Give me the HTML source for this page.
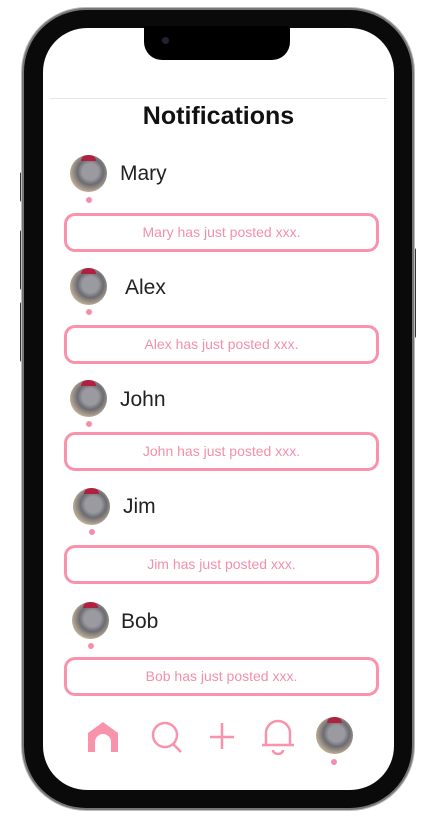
<!DOCTYPE html>
<html><head><style>
body{margin:0;width:445px;height:822px;background:#fff;position:relative;overflow:hidden;font-family:"Liberation Sans",sans-serif}
.abs{position:absolute}
.frame{left:24px;top:10px;width:388px;height:798px;border-radius:62px;background:#0a0a0a;box-shadow:0 0 0 2px #777,0 0 0 3px #bbb}
.screen{left:43px;top:28px;width:351px;height:762px;border-radius:44px;background:#fff}
.notch{left:144px;top:26px;width:146px;height:34px;background:#000;border-radius:0 0 18px 18px}
.av{width:37px;height:37px;border-radius:50%;background:radial-gradient(circle at 55% 45%,#9a9aa0 0 28%,#6b6b72 45%,#c8b79a 75%,#8a7f70);overflow:hidden}
.av:before{content:"";position:absolute;left:11px;top:0;width:15px;height:6px;background:#b02040;border-radius:8px 8px 0 0}
.name{font-size:21px;color:#222}
.dot{width:6px;height:6px;border-radius:50%;background:#f48fab}
.box{left:64px;width:309px;height:33px;border:3px solid #f993ac;border-radius:11px;color:#f48fab;font-size:14px;text-align:center;line-height:33px}
</style></head><body>
<div class="abs" style="left:20px;top:172px;width:6px;height:30px;background:#333;border-radius:2px"></div>
<div class="abs" style="left:20px;top:230px;width:6px;height:60px;background:#333;border-radius:2px"></div>
<div class="abs" style="left:20px;top:302px;width:6px;height:60px;background:#333;border-radius:2px"></div>
<div class="abs" style="left:410px;top:248px;width:6px;height:90px;background:#333;border-radius:2px"></div>
<div class="abs frame"></div>
<div class="abs screen"></div>
<div class="abs notch"></div>
<div class="abs" style="left:162px;top:37px;width:7px;height:7px;border-radius:50%;background:#223"></div>
<div class="abs" style="left:50px;top:98px;width:337px;height:1px;background:#e6e6e6"></div>
<div class="abs" style="left:0;width:437px;top:102px;text-align:center;font-size:25px;font-weight:bold;color:#111">Notifications</div>

<div class="abs av" style="left:70px;top:155px"></div><div class="abs name" style="left:120px;top:162px">Mary</div><div class="abs dot" style="left:86px;top:197px"></div>
<div class="abs box" style="top:213px">Mary has just posted xxx.</div>

<div class="abs av" style="left:70px;top:268px"></div><div class="abs name" style="left:125px;top:276px">Alex</div><div class="abs dot" style="left:86px;top:309px"></div>
<div class="abs box" style="top:325px">Alex has just posted xxx.</div>

<div class="abs av" style="left:70px;top:380px"></div><div class="abs name" style="left:120px;top:388px">John</div><div class="abs dot" style="left:86px;top:421px"></div>
<div class="abs box" style="top:432px">John has just posted xxx.</div>

<div class="abs av" style="left:73px;top:488px"></div><div class="abs name" style="left:123px;top:495px">Jim</div><div class="abs dot" style="left:89px;top:529px"></div>
<div class="abs box" style="top:545px">Jim has just posted xxx.</div>

<div class="abs av" style="left:72px;top:602px"></div><div class="abs name" style="left:121px;top:610px">Bob</div><div class="abs dot" style="left:88px;top:643px"></div>
<div class="abs box" style="top:657px">Bob has just posted xxx.</div>

<svg class="abs" style="left:80px;top:715px" width="290" height="40" viewBox="80 715 290 40">
<path d="M88 752V733L103 722L118 733V752H111V742A8 8 0 0 0 95 742V752Z" fill="#f993ac"/>
<circle cx="165" cy="735" r="12" fill="none" stroke="#f993ac" stroke-width="2.5"/>
<path d="M173 744L181 752" stroke="#f993ac" stroke-width="2.5"/>
<path d="M222 723V749M210 737H234" stroke="#f993ac" stroke-width="2.5"/>
<path d="M266 745V733A12 12 0 0 1 290 733V745M262 745H294M273 750A5 4 0 0 0 283 750" fill="none" stroke="#f993ac" stroke-width="2.5"/>
</svg>
<div class="abs av" style="left:316px;top:717px"></div>
<div class="abs dot" style="left:331px;top:759px"></div>
</body></html>
